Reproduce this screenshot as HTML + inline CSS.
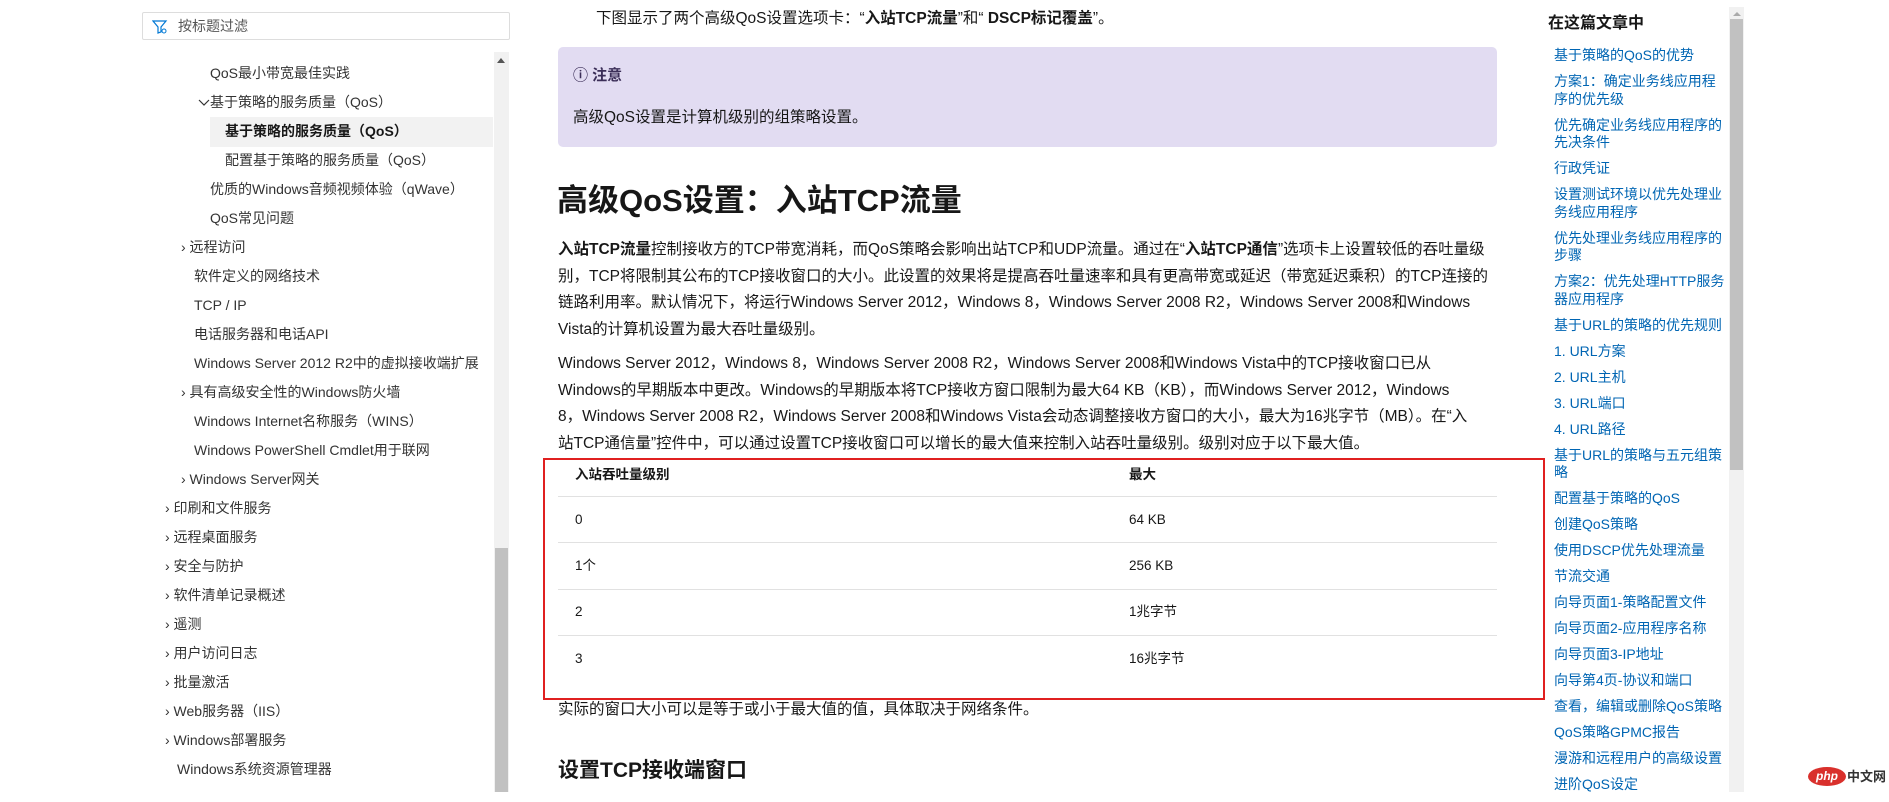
<!DOCTYPE html>
<html><head><meta charset="utf-8"><style>
*{margin:0;padding:0;box-sizing:border-box}
body{width:1889px;height:792px;overflow:hidden;background:#fff;font-family:"Liberation Sans","Noto Sans CJK SC",sans-serif;color:#171717;position:relative}
.a{position:absolute;white-space:nowrap}
.nav{font-size:14px;color:#333;line-height:18px}
.toc{font-size:14px;color:#0065b3;line-height:17.5px;white-space:normal;width:172px}
.p{font-size:15.5px;line-height:26.5px;color:#171717}
.t{font-size:13.5px;color:#171717;line-height:18px}
.hl{position:absolute;left:558px;width:939px;height:1px;background:#e1e1e1}
</style></head><body>
<!-- filter box -->
<div class="a" style="left:142px;top:12px;width:368px;height:28px;border:1px solid #ddd;border-radius:2px"></div>
<svg class="a" style="left:152px;top:19px" width="16" height="16" viewBox="0 0 16 16"><path d="M1 2h13l-5 6v5l-3 1V8z" fill="none" stroke="#0078d4" stroke-width="1.2"/><circle cx="12" cy="12" r="2" fill="none" stroke="#0078d4"/></svg>
<div class="a" style="left:178px;top:17px;font-size:14px;color:#555;line-height:18px">按标题过滤</div>
<!-- nav scrollbar -->
<div class="a" style="left:494px;top:52px;width:15px;height:740px;background:#f1f1f1"></div>
<div class="a" style="left:497px;top:58px;width:0;height:0;border-left:4px solid transparent;border-right:4px solid transparent;border-bottom:5px solid #555"></div>
<div class="a" style="left:495px;top:548px;width:13px;height:244px;background:#c1c1c1"></div>
<div class="a" style="left:210px;top:117px;width:283px;height:30px;background:#f2f2f2"></div>
<div class="a nav" style="left:210px;top:64px">QoS最小带宽最佳实践</div>
<svg class="a" style="left:198px;top:99px" width="12" height="8" viewBox="0 0 12 8"><path d="M1 1l5 5 5-5" fill="none" stroke="#333" stroke-width="1.2"/></svg>
<div class="a nav" style="left:210px;top:93px">基于策略的服务质量（QoS）</div>
<div class="a nav" style="left:225px;top:122px;font-weight:bold;color:#171717">基于策略的服务质量（QoS）</div>
<div class="a nav" style="left:225px;top:151px">配置基于策略的服务质量（QoS）</div>
<div class="a nav" style="left:210px;top:180px">优质的Windows音频视频体验（qWave）</div>
<div class="a nav" style="left:210px;top:209px">QoS常见问题</div>
<div class="a nav" style="left:181px;top:238px">›&nbsp;远程访问</div>
<div class="a nav" style="left:194px;top:267px">软件定义的网络技术</div>
<div class="a nav" style="left:194px;top:296px">TCP / IP</div>
<div class="a nav" style="left:194px;top:325px">电话服务器和电话API</div>
<div class="a nav" style="left:194px;top:354px">Windows Server 2012 R2中的虚拟接收端扩展</div>
<div class="a nav" style="left:181px;top:383px">›&nbsp;具有高级安全性的Windows防火墙</div>
<div class="a nav" style="left:194px;top:412px">Windows Internet名称服务（WINS）</div>
<div class="a nav" style="left:194px;top:441px">Windows PowerShell Cmdlet用于联网</div>
<div class="a nav" style="left:181px;top:470px">›&nbsp;Windows Server网关</div>
<div class="a nav" style="left:165px;top:499px">›&nbsp;印刷和文件服务</div>
<div class="a nav" style="left:165px;top:528px">›&nbsp;远程桌面服务</div>
<div class="a nav" style="left:165px;top:557px">›&nbsp;安全与防护</div>
<div class="a nav" style="left:165px;top:586px">›&nbsp;软件清单记录概述</div>
<div class="a nav" style="left:165px;top:615px">›&nbsp;遥测</div>
<div class="a nav" style="left:165px;top:644px">›&nbsp;用户访问日志</div>
<div class="a nav" style="left:165px;top:673px">›&nbsp;批量激活</div>
<div class="a nav" style="left:165px;top:702px">›&nbsp;Web服务器（IIS）</div>
<div class="a nav" style="left:165px;top:731px">›&nbsp;Windows部署服务</div>
<div class="a nav" style="left:177px;top:760px">Windows系统资源管理器</div>
<!-- main -->
<div class="a p" style="left:596px;top:6px">下图显示了两个高级QoS设置选项卡：“<b>入站TCP流量</b>”和“ <b>DSCP标记覆盖</b>”。</div>
<div class="a" style="left:558px;top:47px;width:939px;height:100px;background:#e2dcf2;border-radius:5px"></div>
<div class="a" style="left:573px;top:66px;font-size:15px;font-weight:bold;color:#3b2e58;line-height:20px">ⓘ 注意</div>
<div class="a" style="left:573px;top:108px;font-size:15.5px;line-height:20px">高级QoS设置是计算机级别的组策略设置。</div>
<div class="a" style="left:557px;top:180px;font-size:31px;font-weight:bold;line-height:42px">高级QoS设置：入站TCP流量</div>
<div class="a p" style="left:558px;top:237px;width:940px;white-space:normal"><b>入站TCP流量</b>控制接收方的TCP带宽消耗，而QoS策略会影响出站TCP和UDP流量。通过在“<b>入站TCP通信</b>”选项卡上设置较低的吞吐量级别，TCP将限制其公布的TCP接收窗口的大小。此设置的效果将是提高吞吐量速率和具有更高带宽或延迟（带宽延迟乘积）的TCP连接的链路利用率。默认情况下，将运行Windows Server 2012，Windows 8，Windows Server 2008 R2，Windows Server 2008和Windows Vista的计算机设置为最大吞吐量级别。</div>
<div class="a p" style="left:558px;top:351px;width:918px;white-space:normal">Windows Server 2012，Windows 8，Windows Server 2008 R2，Windows Server 2008和Windows Vista中的TCP接收窗口已从Windows的早期版本中更改。Windows的早期版本将TCP接收方窗口限制为最大64 KB（KB），而Windows Server 2012，Windows 8，Windows Server 2008 R2，Windows Server 2008和Windows Vista会动态调整接收方窗口的大小，最大为16兆字节（MB）。在“入站TCP通信量”控件中，可以通过设置TCP接收窗口可以增长的最大值来控制入站吞吐量级别。级别对应于以下最大值。</div>
<div class="a" style="left:543px;top:458px;width:1002px;height:242px;border:2px solid #e02020"></div>
<div class="a t" style="left:575px;top:466px;font-weight:bold">入站吞吐量级别</div>
<div class="a t" style="left:1129px;top:466px;font-weight:bold">最大</div>
<div class="hl" style="top:496px"></div><div class="hl" style="top:542px"></div><div class="hl" style="top:589px"></div><div class="hl" style="top:635px"></div>
<div class="a t" style="left:575px;top:511px">0</div><div class="a t" style="left:1129px;top:511px">64 KB</div>
<div class="a t" style="left:575px;top:557px">1个</div><div class="a t" style="left:1129px;top:557px">256 KB</div>
<div class="a t" style="left:575px;top:603px">2</div><div class="a t" style="left:1129px;top:603px">1兆字节</div>
<div class="a t" style="left:575px;top:650px">3</div><div class="a t" style="left:1129px;top:650px">16兆字节</div>
<div class="a p" style="left:558px;top:697px">实际的窗口大小可以是等于或小于最大值的值，具体取决于网络条件。</div>
<div class="a" style="left:558px;top:758px;font-size:21px;font-weight:bold;line-height:26px">设置TCP接收端窗口</div>
<!-- toc -->
<div class="a" style="left:1548px;top:14px;font-size:16px;font-weight:bold;line-height:20px">在这篇文章中</div>
<div class="a" style="left:1554px;top:47px">
<div class="toc" style="margin-bottom:8.5px">基于策略的QoS的优势</div>
<div class="toc" style="margin-bottom:8.5px">方案1：确定业务线应用程序的优先级</div>
<div class="toc" style="margin-bottom:8.5px">优先确定业务线应用程序的先决条件</div>
<div class="toc" style="margin-bottom:8.5px">行政凭证</div>
<div class="toc" style="margin-bottom:8.5px">设置测试环境以优先处理业务线应用程序</div>
<div class="toc" style="margin-bottom:8.5px">优先处理业务线应用程序的步骤</div>
<div class="toc" style="margin-bottom:8.5px">方案2：优先处理HTTP服务器应用程序</div>
<div class="toc" style="margin-bottom:8.5px">基于URL的策略的优先规则</div>
<div class="toc" style="margin-bottom:8.5px">1. URL方案</div>
<div class="toc" style="margin-bottom:8.5px">2. URL主机</div>
<div class="toc" style="margin-bottom:8.5px">3. URL端口</div>
<div class="toc" style="margin-bottom:8.5px">4. URL路径</div>
<div class="toc" style="margin-bottom:8.5px">基于URL的策略与五元组策略</div>
<div class="toc" style="margin-bottom:8.5px">配置基于策略的QoS</div>
<div class="toc" style="margin-bottom:8.5px">创建QoS策略</div>
<div class="toc" style="margin-bottom:8.5px">使用DSCP优先处理流量</div>
<div class="toc" style="margin-bottom:8.5px">节流交通</div>
<div class="toc" style="margin-bottom:8.5px">向导页面1-策略配置文件</div>
<div class="toc" style="margin-bottom:8.5px">向导页面2-应用程序名称</div>
<div class="toc" style="margin-bottom:8.5px">向导页面3-IP地址</div>
<div class="toc" style="margin-bottom:8.5px">向导第4页-协议和端口</div>
<div class="toc" style="margin-bottom:8.5px">查看，编辑或删除QoS策略</div>
<div class="toc" style="margin-bottom:8.5px">QoS策略GPMC报告</div>
<div class="toc" style="margin-bottom:8.5px">漫游和远程用户的高级设置</div>
<div class="toc" style="margin-bottom:8.5px">进阶QoS设定</div>
</div>
<div class="a" style="left:1729px;top:7px;width:15px;height:785px;background:#f1f1f1"></div>
<div class="a" style="left:1733px;top:12px;width:0;height:0;border-left:4px solid transparent;border-right:4px solid transparent;border-bottom:4px solid #aaa"></div>
<div class="a" style="left:1730px;top:19px;width:13px;height:451px;background:#c1c1c1"></div>
<!-- php logo -->
<div class="a" style="left:1808px;top:767px;width:38px;height:19px;border-radius:50%;background:#d9302c;color:#fff;font-size:12px;font-style:italic;font-weight:bold;text-align:center;line-height:19px">php</div>
<div class="a" style="left:1847px;top:767px;font-size:13px;font-weight:bold;color:#333;line-height:19px">中文网</div>
</body></html>
